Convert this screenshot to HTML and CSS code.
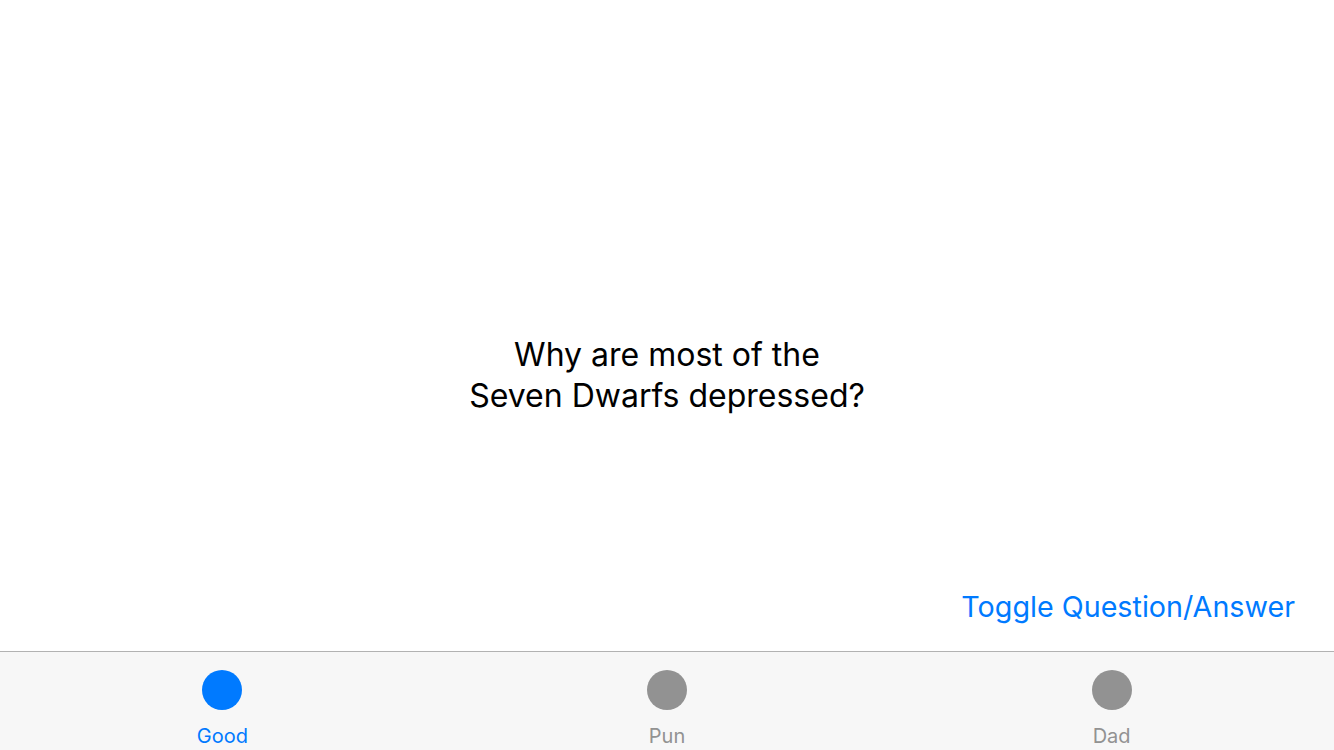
FILE: index.html
```html
<!DOCTYPE html>
<html>
<head>
<meta charset="utf-8">
<link rel="stylesheet" href="styles.css">
</head>
<body>
<div class="app">
  <main class="content">
    <div class="question-area">
      <p class="question">Why are most of the<br>Seven Dwarfs depressed?</p>
    </div>
    <div class="actions">
      <button class="toggle">Toggle Question/Answer</button>
    </div>
  </main>
  <nav class="tabbar">
    <div class="tab active"><span class="dot"></span><span class="label">Good</span></div>
    <div class="tab"><span class="dot"></span><span class="label">Pun</span></div>
    <div class="tab"><span class="dot"></span><span class="label">Dad</span></div>
  </nav>
</div>
</body>
</html>
```
FILE: styles.css
```css
* { box-sizing: border-box; }
html, body { margin: 0; padding: 0; }
body {
  width: 1334px;
  height: 750px;
  background: #fff;
  font-family: Inter, "Liberation Sans", sans-serif;
  overflow: hidden;
}
.app {
  display: flex;
  flex-direction: column;
  height: 750px;
}
.content {
  flex: 1;
  display: flex;
  flex-direction: column;
}
.question-area {
  flex: 1;
  display: flex;
  align-items: center;
  justify-content: center;
  padding-top: 160px;
}
.question {
  margin: 0;
  text-align: center;
  font-size: 32px;
  line-height: 41px;
  color: #000;
}
.actions {
  display: flex;
  justify-content: flex-end;
  padding: 0 39px 26px 0;
}
.toggle {
  border: 0;
  background: none;
  padding: 0;
  font-family: inherit;
  font-size: 28.7px;
  line-height: 36px;
  color: #007aff;
}
.tabbar {
  height: 99px;
  border-top: 1px solid #b2b2b2;
  background: #f7f7f7;
  display: grid;
  grid-template-columns: repeat(3, 1fr);
}
.tab {
  display: flex;
  flex-direction: column;
  align-items: center;
  padding-top: 18px;
}
.dot {
  width: 40px;
  height: 40px;
  border-radius: 50%;
  background: #929292;
}
.label {
  margin-top: 14px;
  font-size: 20px;
  line-height: 24px;
  color: #929292;
}
.tab.active .dot { background: #007aff; }
.tab.active .label { color: #007aff; }
```
